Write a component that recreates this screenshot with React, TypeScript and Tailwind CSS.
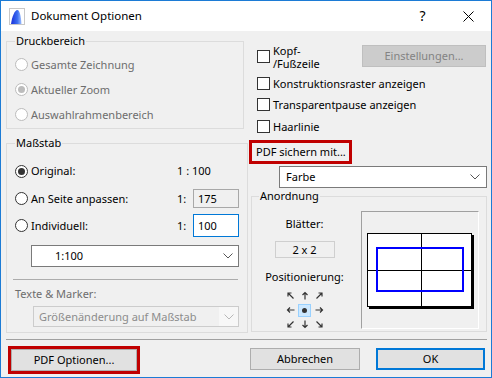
import type { ReactNode } from "react";

function Radio({ checked = false, disabled = false }: { checked?: boolean; disabled?: boolean }) {
  return (
    <span
      className={`flex h-[13px] w-[13px] shrink-0 items-center justify-center rounded-full border bg-white ${
        disabled ? "border-[#bcbcbc]" : "border-[#333333]"
      }`}
    >
      {checked ? (
        <span className={`h-[7px] w-[7px] rounded-full ${disabled ? "bg-[#bcbcbc]" : "bg-[#333333]"}`} />
      ) : null}
    </span>
  );
}

function Checkbox() {
  return <span className="h-[13px] w-[13px] shrink-0 border border-[#333333] bg-white" />;
}

function Chevron({ color = "#555555" }: { color?: string }) {
  return (
    <svg width="10" height="6" viewBox="0 0 10 6" className="shrink-0">
      <polyline points="0.5,0.5 5,5 9.5,0.5" fill="none" stroke={color} strokeWidth="1" />
    </svg>
  );
}

function GroupBox({ label, className, children }: { label: string; className: string; children: ReactNode }) {
  return (
    <fieldset className={`border border-[#dcdcdc] ${className}`}>
      <legend className="px-[1px]">{label}</legend>
      {children}
    </fieldset>
  );
}

function Arrow({ dir }: { dir: string }) {
  const paths: Record<string, string> = {
    n: "M7 10.5V3.5M4.5 6L7 3.5L9.5 6",
    s: "M7 3.5V10.5M4.5 8L7 10.5L9.5 8",
    w: "M10.5 7H3.5M6 4.5L3.5 7L6 9.5",
    e: "M3.5 7H10.5M8 4.5L10.5 7L8 9.5",
    nw: "M9.5 9.5L4 4M4 7.5V4H7.5",
    ne: "M4.5 9.5L10 4M6.5 4H10V7.5",
    sw: "M9.5 4.5L4 10M4 6.5V10H7.5",
    se: "M4.5 4.5L10 10M10 6.5V10H6.5"
  };
  return (
    <svg width="14" height="14" viewBox="0 0 14 14">
      <path d={paths[dir]} fill="none" stroke="#333333" strokeWidth="1.2" />
    </svg>
  );
}

function Preview() {
  return (
    <svg width="116" height="116" viewBox="0 0 116 116">
      <rect x="7" y="23" width="105" height="74" fill="#000000" />
      <rect x="5.5" y="21.5" width="104" height="73" fill="#ffffff" stroke="#000000" />
      <line x1="59.5" y1="21.5" x2="59.5" y2="94.5" stroke="#000000" />
      <line x1="5.5" y1="58.5" x2="109.5" y2="58.5" stroke="#000000" />
      <rect x="15" y="36" width="86" height="43" fill="none" stroke="#0000ff" strokeWidth="2" />
    </svg>
  );
}

function AppIcon() {
  return (
    <svg width="16" height="17" viewBox="0 0 16 17">
      <defs>
        <linearGradient id="ac" x1="0" y1="0" x2="1" y2="0">
          <stop offset="0" stopColor="#1a2fd8" />
          <stop offset="0.6" stopColor="#3a6cf0" />
          <stop offset="1" stopColor="#9fc0ff" />
        </linearGradient>
      </defs>
      <rect x="0.5" y="0.5" width="15" height="16" fill="#ffffff" stroke="#c8c8c8" />
      <path d="M2 16 C3 9 5.5 2 8.5 2 C10.5 2 12 8 12.5 16 Z" fill="url(#ac)" />
    </svg>
  );
}

export default function App() {
  return (
    <div className="flex h-[378px] w-[492px] flex-col whitespace-nowrap border border-[#1c7bd5] bg-[#f0f0f0] font-['Segoe_UI','Noto_Sans',sans-serif] text-[11px] leading-[16px] text-black">
      <div className="flex h-[30px] shrink-0 items-center bg-white pl-[8px]">
        <AppIcon />
        <span className="ml-[6px] text-[11.5px]">Dokument Optionen</span>
        <div className="ml-auto flex h-full">
          <div className="flex w-[45px] items-center justify-center text-[14px]">?</div>
          <div className="flex w-[46px] items-center justify-center">
            <svg width="11" height="11" viewBox="0 0 11 11">
              <path d="M0.5 0.5L10.5 10.5M10.5 0.5L0.5 10.5" stroke="#000000" strokeWidth="1" />
            </svg>
          </div>
        </div>
      </div>

      <div className="flex flex-1 flex-col pl-[5px] pt-[2px]">
        <div className="flex h-[306px] gap-[5px]">
          {/* left column */}
          <div className="flex w-[238px] flex-col">
            <GroupBox label="Druckbereich" className="h-[96px] px-[8px]">
              <div className="flex flex-col pt-[3px] text-[#6d6d6d]">
                <div className="flex h-[25px] items-center gap-[3px]">
                  <Radio disabled />
                  <span>Gesamte Zeichnung</span>
                </div>
                <div className="flex h-[25px] items-center gap-[3px]">
                  <Radio checked disabled />
                  <span>Aktueller Zoom</span>
                </div>
                <div className="flex h-[25px] items-center gap-[3px]">
                  <Radio disabled />
                  <span>Auswahlrahmenbereich</span>
                </div>
              </div>
            </GroupBox>

            <GroupBox label="Maßstab" className="mt-[6px] h-[198px] px-[8px]">
              <div className="flex flex-col">
                <div className="mt-[10px] flex h-[20px] items-center">
                  <div className="flex w-[162px] items-center gap-[3px]">
                    <Radio checked />
                    <span>Original:</span>
                  </div>
                  <span>1 : 100</span>
                </div>
                <div className="mt-[8px] flex h-[19px] items-center">
                  <div className="flex w-[162px] items-center gap-[3px]">
                    <Radio />
                    <span>An Seite anpassen:</span>
                  </div>
                  <span className="w-[16px]">1:</span>
                  <div className="flex h-[19px] w-[46px] items-center border border-[#a8a8a8] bg-[#f0f0f0] pl-[4px]">
                    175
                  </div>
                </div>
                <div className="mt-[6px] flex h-[23px] items-center">
                  <div className="flex w-[162px] items-center gap-[3px]">
                    <Radio />
                    <span>Individuell:</span>
                  </div>
                  <span className="w-[16px]">1:</span>
                  <div className="flex h-[23px] w-[46px] items-center border border-[#0078d7] bg-white pl-[4px]">
                    100
                  </div>
                </div>
                <div className="ml-[16px] mt-[8px] flex h-[22px] w-[208px] items-center justify-between border border-[#7a7a7a] bg-white pl-[23px] pr-[5px]">
                  <span>1:100</span>
                  <Chevron />
                </div>
                <div className="-ml-[2px] mt-[12px] h-px w-[225px] bg-[#acacac]" />
                <div className="mt-[6px] h-[16px] text-[#6d6d6d]">Texte &amp; Marker:</div>
                <div className="ml-[18px] mt-[4px] flex h-[21px] w-[206px] border border-[#cccccc] bg-[#f0f0f0] text-[#8c8c8c]">
                  <span className="flex flex-1 items-center pl-[5px]">Größenänderung auf Maßstab</span>
                  <span className="flex w-[19px] items-center justify-center bg-[#f7f7f7]">
                    <Chevron color="#b8b8b8" />
                  </span>
                </div>
              </div>
            </GroupBox>
          </div>

          {/* right column */}
          <div className="flex w-[238px] flex-col">
            <div className="mt-[12px] flex h-[22px] items-center">
              <span className="ml-[8px] flex shrink-0">
                <Checkbox />
              </span>
              <span className="ml-[3px] mt-[2px] flex shrink-0 flex-col leading-[13px]">
                <span>Kopf-</span>
                <span>/Fußzeile</span>
              </span>
              <div className="ml-auto mr-[1px] flex h-[22px] w-[124px] shrink-0 items-center justify-center border border-[#bfbfbf] bg-[#cccccc] text-[#838383]">
                Einstellungen...
              </div>
            </div>
            <div className="mt-[6px] flex h-[21px] items-center gap-[3px] pl-[8px]">
              <Checkbox />
              <span>Konstruktionsraster anzeigen</span>
            </div>
            <div className="flex h-[21px] items-center gap-[3px] pl-[8px]">
              <Checkbox />
              <span>Transparentpause anzeigen</span>
            </div>
            <div className="mt-[1px] flex h-[21px] items-center gap-[3px] pl-[8px]">
              <Checkbox />
              <span>Haarlinie</span>
            </div>
            <div className="mt-[3px] flex h-[24px] w-[103px] items-center border-[3px] border-[#c00000] pl-[4px]">
              PDF sichern mit...
            </div>
            <div className="ml-[30px] mt-[2px] flex h-[22px] w-[208px] items-center justify-between border border-[#7a7a7a] bg-white pl-[6px] pr-[6px]">
              <span>Farbe</span>
              <Chevron />
            </div>
            <fieldset className="ml-[2px] flex h-[144px] w-[236px] border border-[#dcdcdc]">
              <legend className="ml-[7px] px-[1px]">Anordnung</legend>
              <div className="flex">
                <div className="flex w-[105px] flex-col items-center pt-[12px]">
                  <span className="h-[16px]">Blätter:</span>
                  <div className="mt-[9px] flex h-[17px] w-[60px] items-center justify-center border border-[#cfcfcf]">
                    2 x 2
                  </div>
                  <span className="mt-[11px] h-[16px]">Positionierung:</span>
                  <div className="mt-[4px] grid grid-cols-[14px_14px_14px] grid-rows-[14px_14px_14px]">
                    <Arrow dir="nw" />
                    <Arrow dir="n" />
                    <Arrow dir="ne" />
                    <Arrow dir="w" />
                    <div className="flex h-[14px] w-[14px] items-center justify-center">
                      <div className="flex h-[13px] w-[13px] items-center justify-center border border-[#99d1ff] bg-[#cce8ff]">
                        <span className="h-[5px] w-[5px] rounded-full bg-[#333333]" />
                      </div>
                    </div>
                    <Arrow dir="e" />
                    <Arrow dir="sw" />
                    <Arrow dir="s" />
                    <Arrow dir="se" />
                  </div>
                </div>
                <div className="ml-[4px] mt-[7px] h-[118px] w-[118px] border border-b-white border-l-[#a0a0a0] border-r-white border-t-[#a0a0a0]">
                  <Preview />
                </div>
              </div>
            </fieldset>
          </div>
        </div>

        <div className="h-px w-[481px] bg-[#a0a0a0]" />

        <div className="mt-[6px] flex">
          <div className="ml-[2px] h-[28px] w-[132px] border-[3px] border-[#c00000]">
            <div className="flex h-full w-full items-center justify-center border border-[#adadad] bg-[#e1e1e1]">
              PDF Optionen...
            </div>
          </div>
          <div className="ml-[110px] mt-[2px] flex h-[22px] w-[110px] items-center justify-center border border-[#adadad] bg-[#e1e1e1]">
            Abbrechen
          </div>
          <div className="ml-[16px] mt-[2px] flex h-[22px] w-[109px] items-center justify-center border-2 border-[#0078d7] bg-[#e1e1e1]">
            OK
          </div>
        </div>
      </div>
    </div>
  );
}
